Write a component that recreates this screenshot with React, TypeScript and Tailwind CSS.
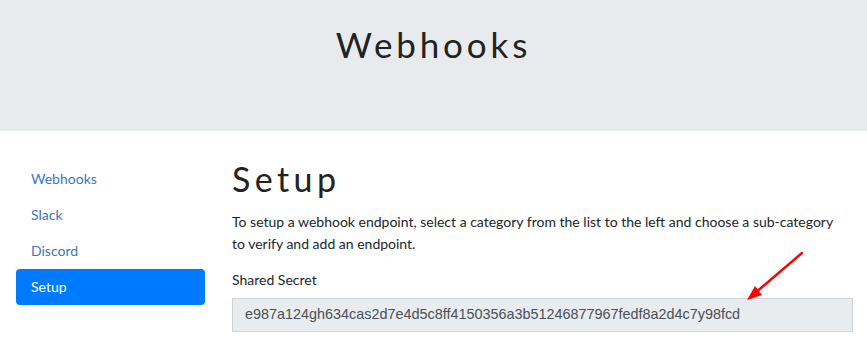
const navItems = ["Webhooks", "Slack", "Discord", "Setup"];

export default function App() {
  return (
    <div className="w-[867px] h-[346px] overflow-hidden bg-white font-['Lato',sans-serif] text-[#212529]">
      <header className="h-[131px] bg-[#e8ebee] flex justify-center pt-[27px]">
        <h1 className="text-[35px] font-normal tracking-[0.11em] text-[#222] leading-none">
          Webhooks
        </h1>
      </header>

      <div className="flex pt-[30px]">
        <nav className="w-[189px] ml-4 flex flex-col">
          {navItems.map((item) => (
            <a
              key={item}
              className={
                item === "Setup"
                  ? "h-9 flex items-center px-[15px] text-sm rounded bg-[#007bff] text-white"
                  : "h-9 flex items-center px-[15px] text-sm text-[#3a76b8]"
              }
            >
              {item}
            </a>
          ))}
        </nav>

        <main className="ml-[27px] w-[621px] relative">
          <h2 className="text-[34px] font-normal leading-none tracking-[0.13em] mt-[1px] text-[#222]">Setup</h2>
          <p className="w-[610px] text-sm leading-[22px] mt-[15px] text-[#212529]">
            To setup a webhook endpoint, select a category from the list to the left and choose a sub-category to verify and add an endpoint.
          </p>
          <label className="block text-sm mt-[15px] text-[#212529]">Shared Secret</label>
          <div className="mt-2 h-[34px] border border-[#ced4da] bg-[#e9ecef] px-3 flex items-center font-['Liberation_Sans',sans-serif] text-[14.4px] text-[#495057]">
            e987a124gh634cas2d7e4d5c8ff4150356a3b51246877967fedf8a2d4c7y98fcd
          </div>
          {/* annotation arrow */}
          <svg className="absolute left-[510px] top-[89px]" width="80" height="60" viewBox="0 0 80 60">
            <line x1="60" y1="3" x2="12" y2="44" stroke="#f00" strokeWidth="2.5" strokeLinecap="round" />
            <polygon points="5,50 13,36 20,45" fill="#f00" />
          </svg>
        </main>
      </div>
    </div>
  );
}
